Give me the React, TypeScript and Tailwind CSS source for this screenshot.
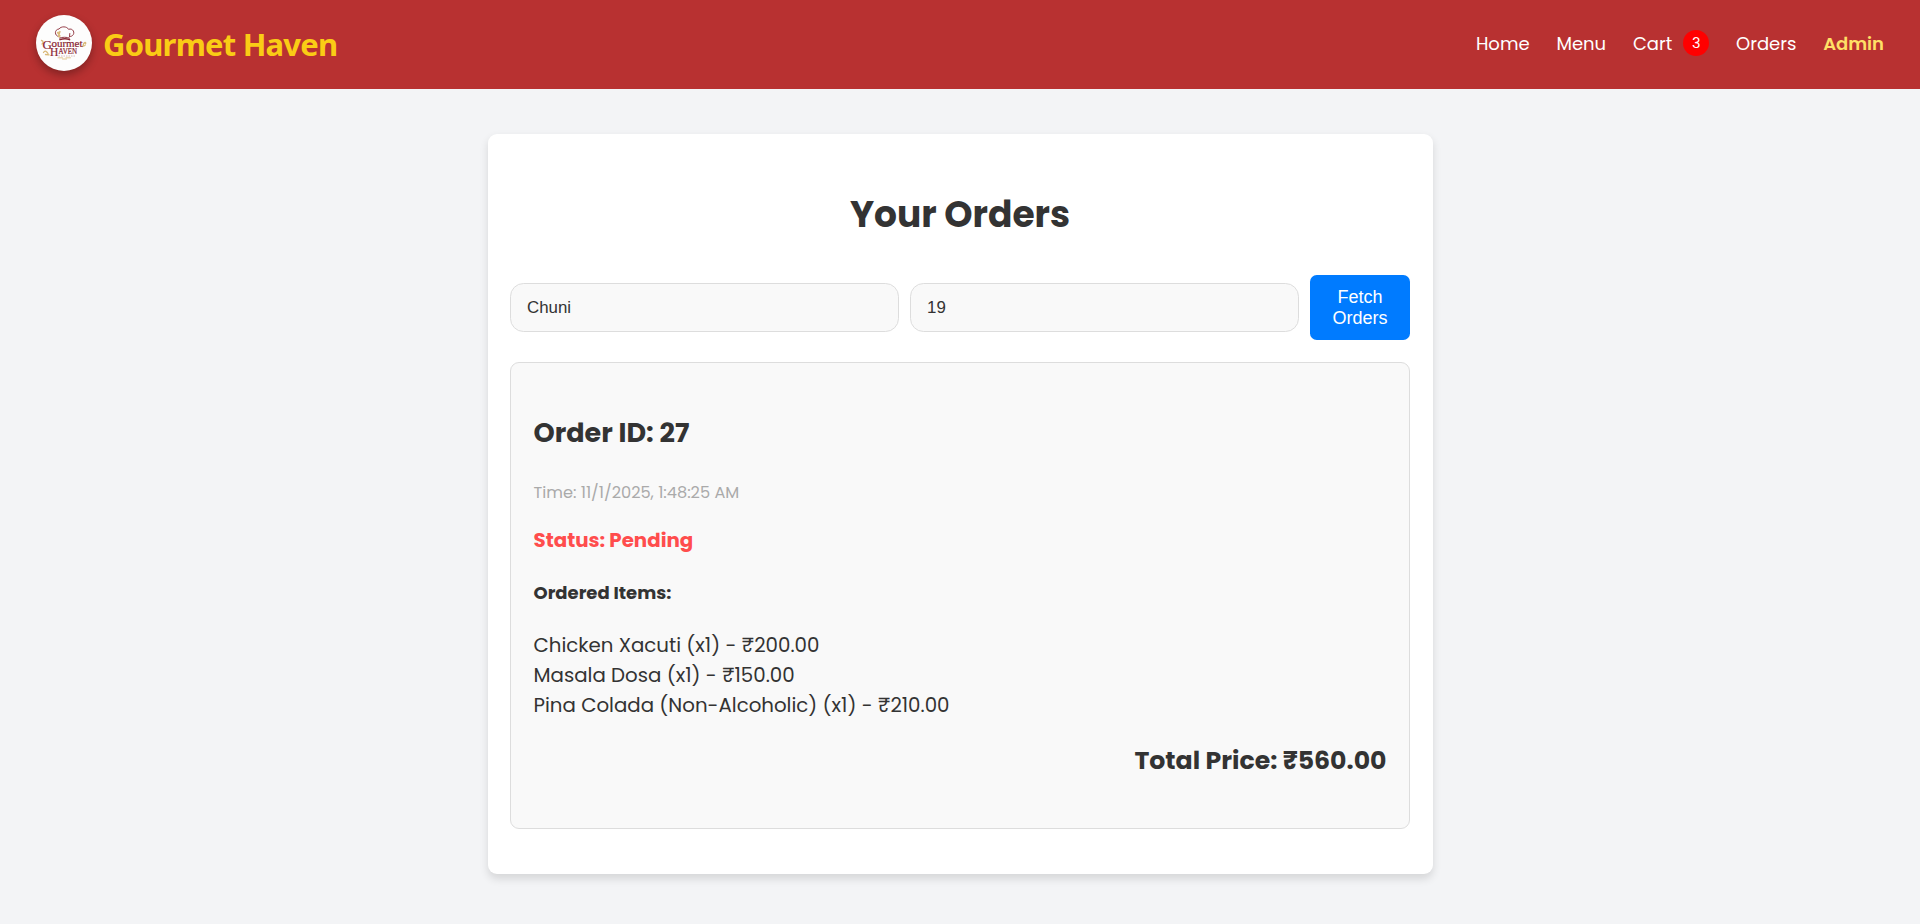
import React from 'react';

const orderedItems = [
  { name: 'Chicken Xacuti', qty: 1, price: '200.00' },
  { name: 'Masala Dosa', qty: 1, price: '150.00' },
  { name: 'Pina Colada (Non-Alcoholic)', qty: 1, price: '210.00' },
];

function Logo() {
  return (
    <div className="size-14 shrink-0 overflow-hidden rounded-full bg-[#fdfdfd] shadow-[0_4px_9px_rgba(0,0,0,0.3)]">
      <svg viewBox="0 0 56 56" className="size-14" fill="none">
        <g stroke="#8a2a35" strokeWidth="0.9" strokeLinecap="round" strokeLinejoin="round">
          <path d="M22.500 21.500 C18.500 21 18 14.500 23 14 C25 11 31 11.200 32.500 14.300 C37 12.800 39.500 18 36.500 20.500 C35.500 21.400 34.500 21.500 33.800 21.500" />
          <path d="M23.500 23 C26 22 31 22 33.500 23" />
          <path d="M24 24.600 C27 23.600 31 23.600 33.500 24.600" strokeWidth="1.6" />
          <path d="M33.800 18.500 L33.500 21.500" />
        </g>
        <g stroke="#d9b978" strokeWidth="1.300" strokeLinecap="round">
          <path d="M21.500 17.500 L24 21 M24 16.500 L22.500 21.500 M23 17 V22" />
          <path d="M5.500 25.500 C7.500 26 7.500 28 6 29" />
          <path d="M7.500 37.500 C9 35 11 36.500 12 38.500 M9.500 39.500 L13 39.800" />
          <path d="M47 30.500 C48 26.500 50.500 27 49.500 29 M46.500 31.500 L49 30.500" />
          <path d="M22 42.800 H26.500 M30 42.800 H34.500 M26.500 44 H30.500" strokeWidth="0.8" />
        </g>
        <g fill="#8a2430" stroke="#8a2430" strokeWidth="0.2" fontFamily="Liberation Serif, serif">
          <text x="6.500" y="33.500" fontSize="13">G</text>
          <text x="15.500" y="32.300" textLength="31" lengthAdjust="spacingAndGlyphs" fontSize="10">ourmet</text>
          <text x="14" y="41" fontSize="11.500">H</text>
          <text x="22.500" y="39" textLength="18.500" lengthAdjust="spacingAndGlyphs" fontSize="7.500">AVEN</text>
        </g>
        <path d="M22.500 41 H39" stroke="#c9a0a0" strokeWidth="0.7" strokeDasharray="1.5 1" />
      </svg>
    </div>
  );
}

function Header() {
  return (
    <header className="flex h-[89px] items-center justify-between bg-[#b83131] pr-9 pb-[3px] pl-9">
      <div className="flex items-center gap-[11px]">
        <Logo />
        <span className="pt-[2px] font-['Segoe_UI','Noto_Sans',sans-serif] text-[31px] leading-[42px] font-bold tracking-[-0.8px] text-[#facc15]">
          Gourmet Haven
        </span>
      </div>
      <nav className="flex items-center gap-[26.800px] text-[18px] leading-[27px] text-white">
        <a>Home</a>
        <a>Menu</a>
        <a className="flex items-center gap-[11px]">
          Cart
          <span className="flex size-[26px] items-center justify-center rounded-full bg-[#ff0000] pb-px text-[14.400px] leading-[22px]">
            3
          </span>
        </a>
        <a>Orders</a>
        <a className="font-semibold text-[#ffe066]">Admin</a>
      </nav>
    </header>
  );
}

function SearchForm() {
  const field =
    'h-[49px] w-[389px] rounded-[13.500px] border border-[#dddddd] bg-[#f9f9f9] px-4 text-[16.875px] text-[#333333] outline-none';
  return (
    <form className="flex items-center justify-between font-['Liberation_Sans',Arial,sans-serif]">
      <input className={field} defaultValue="Chuni" />
      <input className={field} defaultValue="19" />
      <button
        type="button"
        className="h-[65px] w-[100px] rounded-[6.750px] bg-[#007bff] px-4 text-[18px] leading-[21px] text-white"
      >
        Fetch Orders
      </button>
    </form>
  );
}

function OrderCard() {
  return (
    <section className="mt-[22px] h-[467px] rounded-[9px] border border-[#dddddd] bg-[#f9f9f9] px-[22.500px] pt-[49px]">
      <h3 className="text-[27px] leading-[41px] font-bold">Order ID: 27</h3>
      <p className="mt-7 text-[16.200px] leading-6 text-[#aaaaaa]">Time: 11/1/2025, 1:48:25 AM</p>
      <p className="mt-5 text-[19.800px] leading-[30px] font-bold text-[#ff4d4d]">Status: Pending</p>
      <h4 className="mt-6 text-[18px] leading-[27px] font-bold">Ordered Items:</h4>
      <ul className="mt-6 text-[19.800px] leading-[30px]">
        {orderedItems.map((item) => (
          <li key={item.name}>{`${item.name} (x${item.qty}) - ₹${item.price}`}</li>
        ))}
      </ul>
      <p className="mt-[22px] text-right text-[25.200px] leading-[38px] font-bold">Total Price: ₹560.00</p>
    </section>
  );
}

export default function App() {
  return (
    <div className="h-[924px] overflow-hidden bg-[#f3f4f6] font-['Poppins','Inter',sans-serif] text-[#333333]">
      <Header />
      <main className="mx-auto mt-[45px] h-[740px] w-[945px] rounded-[9px] bg-white px-[22.500px] pt-[54px] shadow-[0_4.500px_9px_rgba(0,0,0,0.12)]">
        <h2 className="mb-[33px] text-center text-[36px] leading-[54px] font-bold">Your Orders</h2>
        <SearchForm />
        <OrderCard />
      </main>
    </div>
  );
}
